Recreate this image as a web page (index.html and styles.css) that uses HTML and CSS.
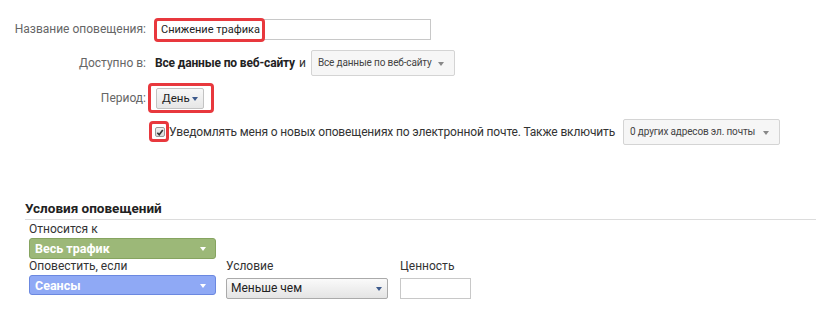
FILE: index.html
```html
<!DOCTYPE html>
<html lang="ru">
<head>
<meta charset="utf-8">
<link rel="stylesheet" href="styles.css">
</head>
<body>
<div class="form">
  <div class="row r1">
    <div class="label">Название оповещения:</div>
    <div class="field">
      <div class="hl-wrap">
        <div class="text-input">Снижение трафика</div>
        <div class="hl hl-name"></div>
      </div>
    </div>
  </div>
  <div class="row r2">
    <div class="label">Доступно в:</div>
    <div class="field">
      <b class="strong">Все данные по веб-сайту</b><span class="and">и</span>
      <div class="select sel-view">Все данные по веб-сайту<span class="caret grey"></span></div>
    </div>
  </div>
  <div class="row r3">
    <div class="label">Период:</div>
    <div class="field">
      <div class="hl-wrap">
        <div class="btn-period">День<span class="caret blue"></span></div>
        <div class="hl hl-period"></div>
      </div>
    </div>
  </div>
  <div class="row r4">
    <div class="label"></div>
    <div class="field">
      <div class="hl-wrap">
        <div class="checkbox"><svg width="9" height="9" viewBox="0 0 9 9"><path d="M1.5 4.8 L3.6 7 L7.6 1.6" fill="none" stroke="#333" stroke-width="1.8"/></svg></div>
        <div class="hl hl-check"></div>
      </div>
      <span class="notify">Уведомлять меня о новых оповещениях по электронной почте. Также включить</span>
      <div class="select sel-mail">0 других адресов эл. почты<span class="caret grey"></span></div>
    </div>
  </div>
</div>

<div class="conditions">
  <div class="cond-title">Условия оповещений</div>
  <div class="cond-body">
    <div class="small-label">Относится к</div>
    <div class="pill green">Весь трафик<span class="caret white"></span></div>
    <div class="cond-grid">
      <div class="col c1">
        <div class="small-label">Оповестить, если</div>
        <div class="pill blue-pill">Сеансы<span class="caret white"></span></div>
      </div>
      <div class="col c2">
        <div class="small-label">Условие</div>
        <div class="plain-select">Меньше чем<span class="caret dark"></span></div>
      </div>
      <div class="col c3">
        <div class="small-label">Ценность</div>
        <div class="value-input"></div>
      </div>
    </div>
  </div>
</div>
</body>
</html>
```

FILE: styles.css
```css
* { box-sizing: border-box; }
html, body { margin: 0; padding: 0; background: #fff; }
body {
  font-family: Roboto, "Liberation Sans", Arial, sans-serif;
  font-size: 12px;
  color: #222;
  width: 816px;
  height: 321px;
  overflow: hidden;
}
.form { padding-top: 16px; }
.row { display: flex; align-items: center; }
.r1 { height: 26px; }
.r2 { height: 26px; margin-top: 8px; }
.r3 { height: 28px; margin-top: 8px; }
.r4 { height: 28px; margin-top: 6px; }
.label {
  width: 146px;
  text-align: right;
  color: #666;
  font-size: 12px;
  flex: none;
}
.field { display: flex; align-items: center; padding-left: 9px; white-space: nowrap; }
.hl-wrap { position: relative; flex: none; }
.hl {
  position: absolute;
  border: 3px solid #e8383d;
  border-radius: 4px;
  pointer-events: none;
}
.text-input {
  width: 276px;
  height: 21px;
  border: 1px solid #c8c8c8;
  font-size: 11px;
  line-height: 19px;
  padding-left: 5px;
  color: #222;
}
.hl-name { left: -1px; top: -1px; width: 111px; height: 24px; }
.strong { font-weight: 700; font-size: 12px; color: #222; letter-spacing: -0.15px; }
.and { margin-left: 4px; color: #333; }
.select {
  position: relative;
  flex: none;
  border: 1px solid #d4d4d4;
  border-radius: 2px;
  background: #f6f6f6;
  height: 26px;
  line-height: 24px;
  font-size: 10px;
  letter-spacing: -0.15px;
  color: #444;
  padding-left: 6px;
  white-space: nowrap;
  overflow: hidden;
}
.sel-view { margin-left: 5px; width: 144px; }
.sel-mail { margin-left: 8px; width: 157px; }
.caret {
  position: absolute;
  width: 0; height: 0;
  border-left: 3.5px solid transparent;
  border-right: 3.5px solid transparent;
  border-top: 4px solid #888;
}
.select .caret { right: 10px; top: 11px; background: #f6f6f6; }
.btn-period {
  position: relative;
  width: 48px;
  height: 21px;
  margin-left: 1px;
  border: 1px solid #c3c3c3;
  border-radius: 2px;
  background: linear-gradient(#f8f8f8, #e6e6e6);
  font-size: 11.5px;
  line-height: 19px;
  padding-left: 5px;
  color: #222;
}
.btn-period .caret { right: 5px; top: 8px; border-top-color: #3d5a8c; }
.hl-period { left: -7px; top: -5px; width: 66px; height: 30px; }
.checkbox {
  width: 10px; height: 10px;
  border: 1px solid #9a9a9a;
  border-radius: 2px;
  background: linear-gradient(#f0f0f0, #d8d8d8);
  display: flex; align-items: center; justify-content: center;
}
.checkbox svg { display: block; }
.hl-check { left: -6px; top: -6px; width: 20px; height: 21px; }
.notify { margin-left: 4px; color: #333; font-size: 12px; letter-spacing: -0.15px; }

.conditions { margin-top: 54px; padding-left: 25px; }
.cond-title {
  font-weight: 700;
  font-size: 13.5px;
  color: #222;
  line-height: 16px;
  padding-bottom: 3px;
  border-bottom: 1px solid #dcdcdc;
}
.cond-body { padding-left: 4px; }
.small-label { font-size: 12px; color: #333; line-height: 14px; margin-top: 2px; }
.cond-grid .small-label { margin-top: 0; }
.pill {
  position: relative;
  width: 187px;
  height: 21px;
  margin-top: 2px;
  border-radius: 3px;
  font-weight: 700;
  color: #fff;
  font-size: 12.5px;
  line-height: 19px;
  padding-left: 5px;
}
.pill .caret { right: 9px; top: 8px; border-top-color: #fff; }
.green { background: #9cb878; border: 1px solid #86a460; }
.blue-pill { background: #8fa9f5; border: 1px solid #6b88e0; height: 20px; }
.cond-grid { display: flex; }
.c1 { width: 197px; }
.c2 { width: 174px; }
.c3 { width: 80px; }
.plain-select {
  position: relative;
  width: 162px;
  height: 21px;
  margin-top: 5px;
  border: 1px solid #aaa;
  border-radius: 2px;
  background: linear-gradient(#fafafa, #e4e4e4);
  font-size: 12px;
  line-height: 19px;
  padding-left: 4px;
  color: #222;
}
.plain-select .caret { right: 5px; top: 8px; border-top-color: #3d5a8c; }
.value-input {
  width: 71px;
  height: 21px;
  margin-top: 5px;
  border: 1px solid #c8c8c8;
}
```
